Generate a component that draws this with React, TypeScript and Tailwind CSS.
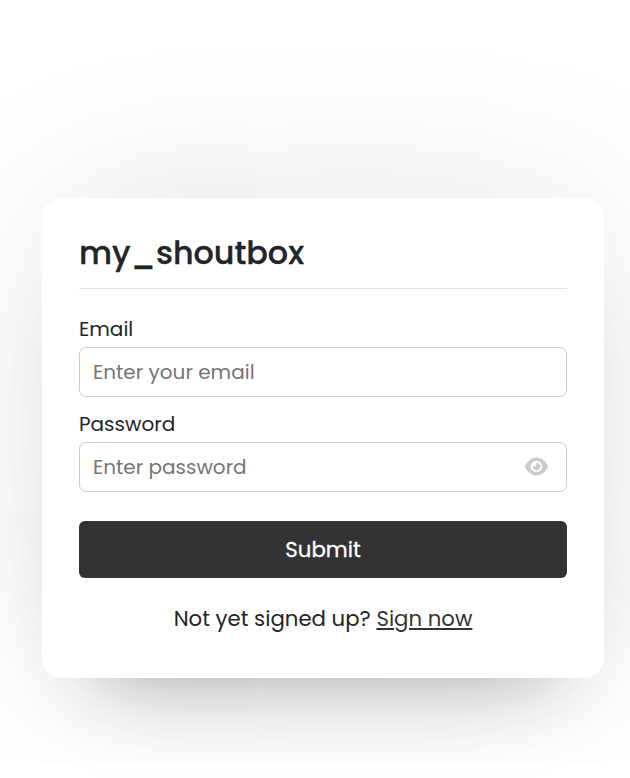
import React from "react";
import { FaEye } from "react-icons/fa6";

function Field({ label, placeholder, type, icon }: { label: string; placeholder: string; type: string; icon?: boolean }) {
  return (
    <label className="block">
      <span className="block h-[37px] pt-px text-[20px] leading-[37px]">{label}</span>
      <span className="flex h-[50px] items-center rounded-[7px] border border-[#cccccc] bg-white px-[13px]">
        <input type={type} placeholder={placeholder} className="min-w-0 flex-1 bg-transparent text-[20px] outline-none placeholder:text-[#757575]" />
        {icon && <FaEye className="mb-px mr-[5px] text-[#cccccc]" size={23} />}
      </span>
    </label>
  );
}

export default function App() {
  return (
    <main className="h-[778px] w-[630px] overflow-hidden bg-white pl-[42px] pt-[198px] font-['Poppins','Open_Sans',sans-serif] text-[#212529]">
      <section className="h-[480px] w-[562px] rounded-[20px] bg-white px-[37px] pt-[32px] shadow-[0_55px_75px_-55px_rgba(0,0,0,0.3),0_0_190px_-20px_rgba(0,0,0,0.14)]">
        <h1 className="h-[59px] border-b border-[#e4e4e5] text-[31.8px] font-medium leading-[46px] [-webkit-text-stroke:0.3px_#212529]">my_shoutbox</h1>
        <form className="pt-[21px]">
          <Field label="Email" placeholder="Enter your email" type="email" />
          <div className="mt-[8px]">
            <Field label="Password" placeholder="Enter password" type="password" icon />
          </div>
          <button type="button" className="mt-[29px] block h-[57px] w-full rounded-[6px] bg-[#333333] text-[21.25px] text-white [-webkit-text-stroke:0.3px_#ffffff]">Submit</button>
          <p className="mt-[25px] text-center text-[21.25px] leading-[32px]">Not yet signed up? <a href="#" className="text-[#333333] underline">Sign now</a></p>
        </form>
      </section>
    </main>
  );
}
